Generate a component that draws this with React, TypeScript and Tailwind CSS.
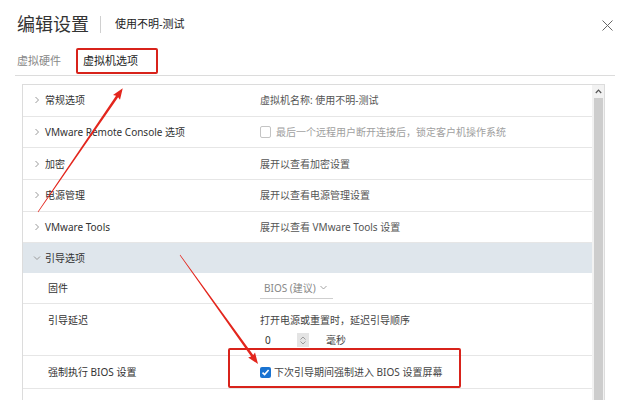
import React from "react";

const FONT = { fontFamily: '"Noto Sans", "Noto Sans CJK SC", sans-serif' };

function ChevronRight() {
  return (
    <svg width="6" height="8" viewBox="0 0 6 8" className="shrink-0">
      <polyline points="1.5,1 4.5,4 1.5,7" fill="none" stroke="#9a9a9a" strokeWidth="1" />
    </svg>
  );
}

function ChevronDown() {
  return (
    <svg width="8" height="6" viewBox="0 0 8 6" className="shrink-0">
      <polyline points="1,1.5 4,4.5 7,1.5" fill="none" stroke="#9a9a9a" strokeWidth="1" />
    </svg>
  );
}

function Row({
  label,
  value,
}: {
  label: string;
  value: React.ReactNode;
}) {
  return (
    <div className="shrink-0 flex items-center h-[31.7px] border-b border-[#e6e6e6] bg-white">
      <div className="w-[237px] flex items-center pl-[11px]">
        <div className="w-[11px] flex items-center">
          <ChevronRight />
        </div>
        <span className="text-[10px] leading-[14px] text-[#333]">{label}</span>
      </div>
      <div className="text-[10px] leading-[14px] text-[#555]">{value}</div>
    </div>
  );
}

function Arrow({ x, y, len, angle }: { x: number; y: number; len: number; angle: number }) {
  const L = len;
  const pts = `0,-0.3 ${L - 10},-1.3 ${L - 11},-4.2 ${L},0 ${L - 11},4.2 ${L - 10},1.3 0,0.3`;
  return (
    <g transform={`translate(${x} ${y}) rotate(${angle})`}>
      <polygon points={pts} fill="#e3261d" />
    </g>
  );
}

export default function App() {
  return (
    <div className="relative w-[624px] h-[400px] overflow-hidden bg-white" style={FONT}>
      {/* Header */}
      <div className="pt-[12px] flex items-center h-[36px] pl-[17px] pr-[11px]">
        <span className="text-[18px] leading-[24px] text-[#333]">编辑设置</span>
        <div className="ml-[11px] w-px h-[17px] bg-[#d0d0d0]" />
        <span className="ml-[14px] text-[11px] leading-[14px] text-[#222]">使用不明-测试</span>
        <svg width="11" height="11" viewBox="0 0 11 11" className="ml-auto mt-[3px]">
          <line x1="0.5" y1="0.5" x2="10.5" y2="10.5" stroke="#666" strokeWidth="1" />
          <line x1="10.5" y1="0.5" x2="0.5" y2="10.5" stroke="#666" strokeWidth="1" />
        </svg>
      </div>

      {/* Tabs */}
      <div className="ml-[15px] w-[600px] h-[40px] border-b border-[#dcdcdc] flex items-end pb-[7px] pl-[2px]">
        <span className="text-[11px] leading-[14px] text-[#888]">虚拟硬件</span>
        <span className="ml-[22px] text-[11px] leading-[14px] text-[#222]">虚拟机选项</span>
      </div>

      {/* Panel */}
      <div className="ml-[22px] mt-[8px] w-[583px] h-[330px] border border-[#dcdcdc] flex overflow-hidden">
        <div className="flex-1 flex flex-col">
          <Row label="常规选项" value={<span>虚拟机名称: 使用不明-测试</span>} />
          <Row
            label="VMware Remote Console 选项"
            value={
              <div className="flex items-center text-[#a0a0a0]">
                <span className="w-[11px] h-[12px] border border-[#c4c4c4] rounded-[2px] bg-white" />
                <span className="ml-[5px]">最后一个远程用户断开连接后，锁定客户机操作系统</span>
              </div>
            }
          />
          <Row label="加密" value={<span>展开以查看加密设置</span>} />
          <Row label="电源管理" value={<span>展开以查看电源管理设置</span>} />
          <Row label="VMware Tools" value={<span>展开以查看 VMware Tools 设置</span>} />

          {/* Expanded section header */}
          <div className="shrink-0 flex items-center h-[30px] bg-[#dfe6ec] pl-[10px]">
            <div className="w-[12px] flex items-center">
              <ChevronDown />
            </div>
            <span className="text-[10px] leading-[14px] text-[#333]">引导选项</span>
          </div>

          {/* 固件 */}
          <div className="shrink-0 flex items-center h-[31px] border-b border-[#e6e6e6] bg-white">
            <div className="w-[237px] pl-[25px] text-[10px] leading-[14px] text-[#333]">固件</div>
            <div className="h-[22px] w-[73px] flex items-center border-b border-[#cfcfcf] pl-[4px] text-[10px] leading-[14px] text-[#888]">
              <span>BIOS (建议)</span>
              <svg width="7" height="5" viewBox="0 0 7 5" className="ml-[4px]">
                <polyline points="0.5,1 3.5,4 6.5,1" fill="none" stroke="#999" strokeWidth="0.9" />
              </svg>
            </div>
          </div>

          {/* 引导延迟 */}
          <div className="shrink-0 flex items-start h-[52px] border-b border-[#e6e6e6] bg-white pt-[9px]">
            <div className="w-[237px] pl-[25px] text-[10px] leading-[14px] text-[#333]">引导延迟</div>
            <div className="flex flex-col text-[10px] leading-[14px] text-[#444]">
              <span>打开电源或重置时，延迟引导顺序</span>
              <div className="mt-[6px] flex items-center h-[14px]">
                <span className="ml-[5px] w-[32px] text-[#333]">0</span>
                <div className="w-[12px] h-[14px] bg-[#e4e4e4] flex flex-col items-center justify-center gap-[1px]">
                  <svg width="6" height="4" viewBox="0 0 6 4">
                    <polyline points="0.5,3.5 3,1 5.5,3.5" fill="none" stroke="#888" strokeWidth="0.8" />
                  </svg>
                  <svg width="6" height="4" viewBox="0 0 6 4">
                    <polyline points="0.5,0.5 3,3 5.5,0.5" fill="none" stroke="#888" strokeWidth="0.8" />
                  </svg>
                </div>
                <span className="ml-[17px]">毫秒</span>
              </div>
            </div>
          </div>

          {/* 强制执行 BIOS 设置 */}
          <div className="shrink-0 flex items-center h-[33px] border-b border-[#e6e6e6] bg-white">
            <div className="w-[237px] pl-[25px] text-[10px] leading-[14px] text-[#333]">强制执行 BIOS 设置</div>
            <div className="flex items-center text-[10px] leading-[14px] text-[#444]">
              <span className="w-[11px] h-[11px] rounded-[2px] bg-[#1a73d1] flex items-center justify-center">
                <svg width="9" height="9" viewBox="0 0 9 9">
                  <polyline points="1.5,4.6 3.6,6.6 7.6,2" fill="none" stroke="#fff" strokeWidth="1.6" />
                </svg>
              </span>
              <span className="ml-[3px]">下次引导期间强制进入 BIOS 设置屏幕</span>
            </div>
          </div>

          {/* 引导失败后恢复 */}
          <div className="shrink-0 flex items-start h-[40px] bg-white pt-[10px]">
            <div className="w-[237px] pl-[25px] text-[10px] leading-[14px] text-[#333]">引导失败后恢复</div>
            <div className="flex items-center text-[10px] leading-[14px] text-[#444]">
              <span className="w-[11px] h-[11px] border border-[#c4c4c4] rounded-[2px] bg-white" />
              <span className="ml-[4px]">如果虚拟机找不到引导设备，则在以下时间后自动重试</span>
            </div>
          </div>
        </div>

        {/* Scrollbar */}
        <div className="shrink-0 w-[12px] bg-[#f2f2f2] flex flex-col items-center">
          <div className="h-[13px] flex items-center justify-center">
            <svg width="7" height="5" viewBox="0 0 7 5">
              <polyline points="0.8,4 3.5,1.2 6.2,4" fill="none" stroke="#555" strokeWidth="1.2" />
            </svg>
          </div>
          <div className="w-[9px] flex-1 bg-[#cdcdcd]" />
        </div>
      </div>

      {/* Annotations */}
      <div className="absolute left-[76px] top-[48px] w-[82px] h-[26px] border-2 border-[#d8231b] rounded-[2px] pointer-events-none" />
      <div className="absolute left-[228px] top-[348px] w-[233px] h-[40px] border-2 border-[#d8231b] rounded-[2px] pointer-events-none" />
      <svg className="absolute left-0 top-0 pointer-events-none" width="624" height="400" viewBox="0 0 624 400">
        <Arrow x={38} y={212} len={150} angle={-55.6} />
        <Arrow x={180} y={255} len={134} angle={54.4} />
      </svg>
    </div>
  );
}
